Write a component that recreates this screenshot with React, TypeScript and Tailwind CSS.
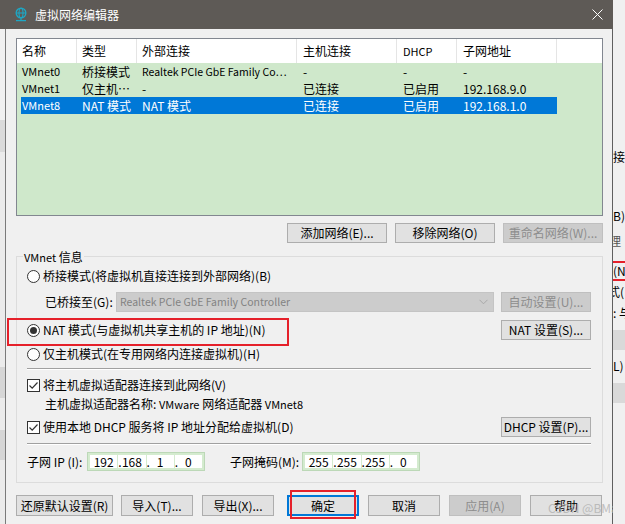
import React from "react"

const rows = [
  { name: "VMnet0", type: "桥接模式", ext: "Realtek PCIe GbE Family Co…", host: "-", dhcp: "-", subnet: "-" },
  { name: "VMnet1", type: "仅主机…", ext: "-", host: "已连接", dhcp: "已启用", subnet: "192.168.9.0" },
  { name: "VMnet8", type: "NAT 模式", ext: "NAT 模式", host: "已连接", dhcp: "已启用", subnet: "192.168.1.0", selected: true },
]

function Btn({ label, w, disabled, focused, className = "" }: { label: string; w: string; disabled?: boolean; focused?: boolean; className?: string }) {
  const base = "h-[20px] flex items-center justify-center shrink-0 text-[12px] leading-none"
  const look = disabled
    ? "bg-[#cccccc] border border-[#bfbfbf] text-[#8d8d8d]"
    : focused
      ? "bg-[#e1e1e1] border-2 border-[#0078d7] text-black"
      : "bg-[#e1e1e1] border border-[#adadad] text-black"
  return <div className={`${base} ${look} ${w} ${className}`}>{label}</div>
}

function Radio({ checked }: { checked?: boolean }) {
  return (
    <div className="w-[13px] h-[13px] rounded-full border border-[#333333] bg-white flex items-center justify-center shrink-0">
      {checked && <div className="w-[7px] h-[7px] rounded-full bg-[#333333]" />}
    </div>
  )
}

function Check() {
  return (
    <div className="w-[13px] h-[13px] border border-[#333333] bg-white shrink-0 flex items-center justify-center">
      <svg width="11" height="11" viewBox="0 0 11 11">
        <path d="M1.5 5.5 L4.2 8.2 L9.5 2.5" fill="none" stroke="#333333" strokeWidth="1.2" />
      </svg>
    </div>
  )
}

function IpBox({ parts }: { parts: string[] }) {
  return (
    <div className="h-[19px] w-[118px] shrink-0 border border-[#bcd8b7] bg-[#d4ebcf] p-[2px] flex gap-[1px]">
      {parts.map((p, i) => (
        <div key={i} className="flex-1 bg-white flex items-center text-[12px] leading-none">
          <span className="w-[3px] text-center">{i > 0 ? "." : ""}</span>
          <span className="flex-1 text-center pr-[3px]">{p}</span>
        </div>
      ))}
    </div>
  )
}

function Globe() {
  return (
    <svg width="12" height="15" viewBox="0 0 12 15">
      <circle cx="6" cy="6" r="4.8" fill="none" stroke="#1ea7c4" strokeWidth="1.4" />
      <ellipse cx="6" cy="6" rx="2" ry="4.8" fill="none" stroke="#1ea7c4" strokeWidth="1.1" />
      <line x1="1.2" y1="6" x2="10.8" y2="6" stroke="#1ea7c4" strokeWidth="1.1" />
      <line x1="6" y1="10.8" x2="6" y2="13" stroke="#1ea7c4" strokeWidth="1.2" />
      <line x1="1" y1="13.6" x2="11" y2="13.6" stroke="#1ea7c4" strokeWidth="1.3" />
    </svg>
  )
}

export default function App() {
  return (
    <div className="w-[625px] h-[524px] overflow-hidden bg-[#f0f0f0] flex font-['Noto_Sans_CJK_SC',sans-serif] text-black">
      {/* dialog */}
      <div className="w-[613px] shrink-0 flex flex-col">
        <div className="h-[29px] bg-[#5e5a56] flex items-center pl-[15px] pr-[10px] shrink-0">
          <Globe />
          <span className="ml-[8px] text-[12px] text-white">虚拟网络编辑器</span>
          <svg className="ml-auto" width="11" height="11" viewBox="0 0 11 11">
            <path d="M0.5 0.5 L10.5 10.5 M10.5 0.5 L0.5 10.5" stroke="#ffffff" strokeWidth="1" />
          </svg>
        </div>
        <div className="flex-1 flex">
          <div className="w-[5px] bg-[#ebebeb] shrink-0 flex flex-col">
            <div className="h-[91px] bg-[#f0f0f0]" />
            <div className="h-[32px] bg-[#dadada]" />
            <div className="h-[215px]" />
            <div className="h-[31px] bg-[#d6d6d6]" />
            <div className="h-[32px]" />
            <div className="h-[30px] bg-[#d6d6d6]" />
          </div>
          <div className="w-px bg-[#7a7a7a] shrink-0" />
          <div className="relative flex-1 bg-[#f0f0f0] pt-[9px] pl-[10px] pr-[9px] text-[12px]">
            {/* network list */}
            <div className="h-[178px] border border-[#828790] bg-[#cfe8cb]">
              <div className="h-[24px] bg-white grid grid-cols-[60px_60px_160px_100px_60px_100px_1fr]">
                {["名称", "类型", "外部连接", "主机连接", "DHCP", "子网地址"].map((h, i) => (
                  <div
                    key={h}
                    className={`border-r border-[#e5e5e5] flex items-center ${i > 2 ? "pl-[6px]" : "pl-[5px]"} ${h === "DHCP" ? "text-[11px]" : ""}`}
                  >
                    {h}
                  </div>
                ))}
                <div />
              </div>
              {rows.map((r) => (
                <div key={r.name} className="pl-[4px] h-[17px]">
                  <div
                    className={`h-[17px] w-[536px] grid grid-cols-[56px_60px_160px_100px_60px_100px] leading-[17px] ${
                      r.selected ? "bg-[#0078d7] text-white" : ""
                    }`}
                  >
                    <div className="pl-[1px] text-[11px]">{r.name}</div>
                    <div className="pl-[5px]">{r.type}</div>
                    <div className={`pl-[5px] whitespace-nowrap overflow-hidden ${r.ext.startsWith("Realtek") ? "text-[10.5px]" : ""}`}>
                      {r.ext}
                    </div>
                    <div className="pl-[6px]">{r.host}</div>
                    <div className="pl-[6px]">{r.dhcp}</div>
                    <div className="pl-[6px]">{r.subnet}</div>
                  </div>
                </div>
              ))}
            </div>

            <div className="mt-[7px] flex justify-end gap-[8px]">
              <Btn label="添加网络(E)..." w="w-[100px]" />
              <Btn label="移除网络(O)" w="w-[100px]" />
              <Btn label="重命名网络(W)..." w="w-[100px]" disabled />
            </div>

            {/* VMnet info group */}
            <div className="relative mt-[13px] border border-[#dcdcdc] pl-[10px] pr-[11px] pb-[11px]">
              <div className="absolute -top-[7px] left-[6px] px-[1px] bg-[#f0f0f0] leading-[14px]">
                <span className="text-[11px]">VMnet</span> 信息
              </div>
              <div className="mt-[9px] h-[20px] flex items-center gap-[3px]">
                <Radio />
                <span>桥接模式(将虚拟机直接连接到外部网络)(B)</span>
              </div>
              <div className="mt-[6px] h-[20px] flex items-center">
                <span className="w-[89px] pl-[18px] shrink-0">已桥接至(G):</span>
                <div className="w-[378px] h-[20px] bg-[#cccccc] border border-[#c4c4c4] flex items-center pl-[3px] pr-[5px] text-[#838383]">
                  <span className="text-[10.5px]">Realtek PCIe GbE Family Controller</span>
                  <svg className="ml-auto" width="9" height="6" viewBox="0 0 9 6">
                    <path d="M0.5 0.8 L4.5 4.8 L8.5 0.8" fill="none" stroke="#a8a8a8" strokeWidth="1" />
                  </svg>
                </div>
                <Btn label="自动设置(U)..." w="w-[90px]" disabled className="ml-[7px]" />
              </div>
              <div className="mt-[8px] h-[20px] flex items-center gap-[3px]">
                <Radio checked />
                <span>NAT 模式(与虚拟机共享主机的 IP 地址)(N)</span>
                <Btn label="NAT 设置(S)..." w="w-[90px]" className="ml-auto" />
              </div>
              <div className="mt-[4px] h-[20px] flex items-center gap-[3px]">
                <Radio />
                <span>仅主机模式(在专用网络内连接虚拟机)(H)</span>
              </div>
              <div className="mt-[4px] h-px bg-[#a0a0a0]" />
              <div className="h-px bg-white" />
              <div className="mt-[5px] h-[20px] flex items-center gap-[3px]">
                <Check />
                <span>将主机虚拟适配器连接到此网络(V)</span>
              </div>
              <div className="h-[18px] flex items-center pl-[18px] whitespace-pre">
                主机虚拟适配器名称: <span className="text-[11px]">VMware</span> 网络适配器 <span className="text-[11px]">VMnet8</span>
              </div>
              <div className="mt-[4px] h-[20px] flex items-center gap-[3px]">
                <Check />
                <span>使用本地 DHCP 服务将 IP 地址分配给虚拟机(D)</span>
                <Btn label="DHCP 设置(P)..." w="w-[90px]" className="ml-auto" />
              </div>
              <div className="mt-[6px] h-px bg-[#a0a0a0]" />
              <div className="h-px bg-white" />
              <div className="mt-[7px] h-[19px] flex items-center">
                <span className="w-[60px] shrink-0">子网 IP (I):</span>
                <IpBox parts={["192", "168", "1", "0"]} />
                <span className="ml-[25px] w-[72px] shrink-0">子网掩码(M):</span>
                <IpBox parts={["255", "255", "255", "0"]} />
              </div>
            </div>

            {/* bottom buttons */}
            <div className="mt-[12px] flex">
              <Btn label="还原默认设置(R)" w="w-[97px]" className="h-[21px]" />
              <Btn label="导入(T)..." w="w-[72px]" className="ml-[8px] h-[21px]" />
              <Btn label="导出(X)..." w="w-[72px]" className="ml-[9px] h-[21px]" />
              <Btn label="确定" w="w-[72px]" focused className="ml-[13px] h-[21px]" />
              <Btn label="取消" w="w-[72px]" className="ml-[9px] h-[21px]" />
              <Btn label="应用(A)" w="w-[72px]" disabled className="ml-[9px] h-[21px]" />
              <Btn label="帮助" w="w-[72px]" className="ml-[9px] h-[21px]" />
            </div>

            {/* annotations */}
            <div className="absolute left-[1px] top-[289px] w-[282px] h-[28px] border-2 border-[#e5202a]" />
            <div className="absolute left-[284px] top-[461px] w-[66px] h-[29px] border-2 border-[#e5202a]" />
            <div className="absolute left-[542px] top-[470px] text-[12px] text-[#b0b0b0]/80 whitespace-nowrap">CSDN @BMao</div>
          </div>
          <div className="w-px bg-[#5f5f5f] shrink-0" />
        </div>
      </div>

      {/* background window peeking on the right */}
      <div className="relative flex-1 bg-[#f0f0f0] overflow-hidden text-[12px] leading-[14px]">
        <div className="absolute left-0 top-[150px] whitespace-nowrap">接(</div>
        <div className="absolute left-0 top-[209px] whitespace-nowrap">B)</div>
        <div className="absolute -left-[4px] top-[234px] whitespace-nowrap text-[#555]">理</div>
        <div className="absolute left-0 top-[261px] w-full h-[2px] bg-[#e5202a]" />
        <div className="absolute left-0 top-[264px] whitespace-nowrap">(N</div>
        <div className="absolute left-0 top-[279px] w-full h-[2px] bg-[#e5202a]" />
        <div className="absolute -left-[5px] top-[285px] whitespace-nowrap">式(</div>
        <div className="absolute left-0 top-[306px] whitespace-nowrap">: 与</div>
        <div className="absolute left-0 top-[330px] w-full h-[20px] bg-[#d9d9d9]" />
        <div className="absolute left-0 top-[359px] whitespace-nowrap">L)</div>
        <div className="absolute left-0 top-[383px] w-full h-[20px] bg-[#d9d9d9]" />
      </div>
    </div>
  )
}
